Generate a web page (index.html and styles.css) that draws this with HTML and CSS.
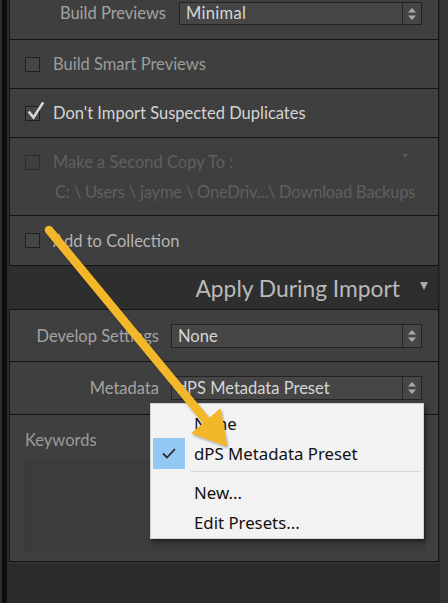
FILE: index.html
```html
<!DOCTYPE html>
<html>
<head>
<meta charset="utf-8">
<link rel="stylesheet" href="styles.css">
</head>
<body>
<div class="screen">
  <div class="edge-left"></div>
  <div class="main">
    <section class="panel panel-top">
      <div class="row r-previews">
        <span class="label lab-a">Build Previews</span>
        <div class="select sel-a">
          <span class="value">Minimal</span>
          <span class="stepper"><svg width="10" height="14" viewBox="0 0 10 14"><path d="M5 1 L9 5.5 L1 5.5 Z M1 8.5 L9 8.5 L5 13 Z" fill="#a9a9a9"/></svg></span>
        </div>
      </div>
      <div class="row r-check r-smart">
        <span class="cb"></span>
        <span class="ctext t-mid">Build Smart Previews</span>
      </div>
      <div class="row r-check r-dup">
        <span class="cb checked"><svg class="tick" width="18" height="20" viewBox="0 0 18 20"><path d="M2.5 11.5 L6.5 16.5 L15.5 2.5" fill="none" stroke="#d9d9d9" stroke-width="2.6" stroke-linecap="square"/></svg></span>
        <span class="ctext t-bright">Don't Import Suspected Duplicates</span>
      </div>
      <div class="row r-copy">
        <div class="copy-line">
          <span class="cb cb-dis"></span>
          <span class="ctext t-dis">Make a Second Copy To :</span>
          <span class="mini-tri"></span>
        </div>
        <div class="copy-path t-dis">C: \ Users \ jayme \ OneDriv...\ Download Backups</div>
      </div>
      <div class="row r-check r-coll">
        <span class="cb"></span>
        <span class="ctext t-mid2">Add to Collection</span>
      </div>
    </section>
    <div class="section-head">
      <span class="head-title">Apply During Import</span>
      <svg class="head-tri" width="8" height="8" viewBox="0 0 8 8"><path d="M0 0 L8 0 L4 8 Z" fill="#a9a9a9"/></svg>
    </div>
    <section class="panel panel-bottom">
      <div class="row r-dev">
        <span class="label lab-b">Develop Settings</span>
        <div class="select sel-b">
          <span class="value">None</span>
          <span class="stepper"><svg width="10" height="14" viewBox="0 0 10 14"><path d="M5 1 L9 5.5 L1 5.5 Z M1 8.5 L9 8.5 L5 13 Z" fill="#a9a9a9"/></svg></span>
        </div>
      </div>
      <div class="row r-meta">
        <span class="label lab-b">Metadata</span>
        <div class="select sel-b">
          <span class="value">dPS Metadata Preset</span>
          <span class="stepper"><svg width="10" height="14" viewBox="0 0 10 14"><path d="M5 1 L9 5.5 L1 5.5 Z M1 8.5 L9 8.5 L5 13 Z" fill="#a9a9a9"/></svg></span>
        </div>
      </div>
      <div class="keywords">
        <span class="kw-label">Keywords</span>
        <div class="kw-box"></div>
      </div>
    </section>
    <div class="bottom"></div>
  </div>
  <div class="edge-right"></div>
</div>

<div class="menu">
  <div class="mi"><span class="mcheck"></span><span class="mtext">None</span></div>
  <div class="mi"><span class="mcheck on"><svg width="14" height="11" viewBox="0 0 14 11"><path d="M1 5.5 L5 9.5 L13 1" fill="none" stroke="#2b2b2b" stroke-width="1.8"/></svg></span><span class="mtext">dPS Metadata Preset</span></div>
  <div class="msep"></div>
  <div class="mi"><span class="mcheck"></span><span class="mtext">New...</span></div>
  <div class="mi"><span class="mcheck"></span><span class="mtext">Edit Presets...</span></div>
</div>

<svg class="arrow" width="448" height="603" viewBox="0 0 448 603">
  <defs>
    <filter id="sh" x="-10%" y="-10%" width="130%" height="130%">
      <feDropShadow dx="1" dy="1.5" stdDeviation="1.2" flood-color="#000" flood-opacity="0.35"/>
    </filter>
  </defs>
  <g filter="url(#sh)">
    <line x1="49" y1="230" x2="209" y2="424" stroke="#f3b72a" stroke-width="8.5" stroke-linecap="round"/>
    <path d="M226 445 L220 410 L193 433 Z" fill="#f3b72a" stroke="#f3b72a" stroke-width="2" stroke-linejoin="round"/>
  </g>
</svg>
</body>
</html>
```
FILE: styles.css
```css
* { box-sizing: border-box; }
html, body { margin: 0; padding: 0; }
body {
  width: 448px;
  height: 603px;
  overflow: hidden;
  position: relative;
  background: #2b2b2b;
  font-family: Lato, "Liberation Sans", sans-serif;
  font-size: 16.5px;
}
.screen { display: flex; height: 603px; }
.edge-left {
  width: 9px; flex: none;
  border-left: 2px solid #2e2e2e;
  border-right: 2px solid #2c2c2c;
  background: #0e0e0e;
}
.main { width: 430px; flex: none; display: flex; flex-direction: column; }
.edge-right { flex: 1; background: #333333; border-left: 1px solid #2a2a2a; }

.panel {
  background: #3f3f3f;
  border-left: 1px solid #161616;
  border-right: 1px solid #161616;
}
.row { display: flex; align-items: center; border-bottom: 1px solid #141414; }

.r-previews { height: 40px; align-items: flex-start; padding-top: 2px; }
.r-smart { height: 49px; }
.r-dup { height: 49px; }
.r-copy { height: 78px; flex-direction: column; align-items: stretch; padding-top: 14px; }
.r-coll { height: 50px; }

.r-check { padding-left: 15px; gap: 13px; }

.label { color: #a3a3a3; text-align: right; white-space: nowrap; flex: none; }
.lab-a { width: 156px; margin-right: 13px; line-height: 23px; }
.lab-b { width: 149px; margin-right: 12px; }

.select {
  display: flex; flex: none;
  background: #464646;
  border: 1px solid #232323;
  height: 23px;
}
.sel-a { width: 243px; }
.sel-b { width: 251px; height: 24px; }
.value { flex: 1; color: #d6d6d6; padding-left: 6px; line-height: 21px; white-space: nowrap; overflow: hidden; }
.sel-a .value { letter-spacing: 0.3px; }
.sel-b .value { line-height: 22px; }
.stepper {
  width: 19px; flex: none;
  border-left: 1px solid #262626;
  display: flex; align-items: center; justify-content: center;
}

.cb {
  width: 15px; height: 15px; flex: none;
  border: 1px solid #1e1e1e;
  background: #454545;
  position: relative;
}
.cb-dis { border-color: #2c2c2c; background: #3f3f3f; }
.tick { position: absolute; left: 1px; top: -6px; }

.ctext { white-space: nowrap; }
.t-mid { color: #9c9c9c; }
.t-bright { color: #d4d4d4; }
.t-mid2 { color: #b4b4b4; }
.t-dis { color: #5f5f5f; }

.copy-line { display: flex; align-items: center; gap: 13px; padding-left: 15px; height: 20px; }
.mini-tri {
  margin-left: auto; margin-right: 30px;
  width: 0; height: 0;
  border-left: 3.5px solid transparent;
  border-right: 3.5px solid transparent;
  border-top: 4px solid #5a5a5a;
  align-self: flex-start; margin-top: 2px;
}
.copy-path { padding-left: 45px; margin-top: 10px; white-space: nowrap; letter-spacing: -0.2px; }

.section-head {
  height: 43px;
  background: #2e2e2e;
  display: flex; align-items: center; justify-content: flex-end;
  padding-right: 10px;
  border-right: 1px solid #1d1d1d;
}
.head-title { color: #b9b9b9; font-size: 22.8px; margin-right: 20px; padding-bottom: 0; }
.head-tri { margin-bottom: 4px; }

.panel-bottom { border-top: 1px solid #141414; }
.r-dev { height: 52px; }
.r-meta { height: 53px; }
.keywords {
  height: 147px;
  border-bottom: 1px solid #141414;
  padding: 14px 13px 0 14px;
}
.kw-label { display: block; color: #9a9a9a; margin-left: 1px; line-height: 22px; }
.kw-box {
  margin-top: 9px;
  height: 91px;
  background: #3c3c3c;
  border: 1px solid #383838;
}
.bottom { flex: 1; background: #2a2a2a; border-top: 2px solid #323232; }

.menu {
  position: absolute;
  left: 150px; top: 403px;
  width: 274px; height: 136px;
  background: #f2f2f2;
  border: 1px solid #d0d0d0;
  padding: 4px 2px 1px 2px;
  box-shadow: 2px 3px 4px rgba(0,0,0,0.45);
  font-family: "Noto Sans", "Open Sans", sans-serif;
  font-size: 16.8px;
  color: #111;
}
.mi { display: flex; align-items: center; height: 30px; }
.mcheck { width: 32px; height: 30px; flex: none; display: flex; align-items: center; justify-content: center; }
.mcheck.on { background: #92c8f3; height: 31px; }
.mtext { margin-left: 9px; white-space: nowrap; }
.msep { height: 1px; background: #d8d8d8; margin: 3px 0 5px 38px; }

.arrow { position: absolute; left: 0; top: 0; pointer-events: none; }
```
